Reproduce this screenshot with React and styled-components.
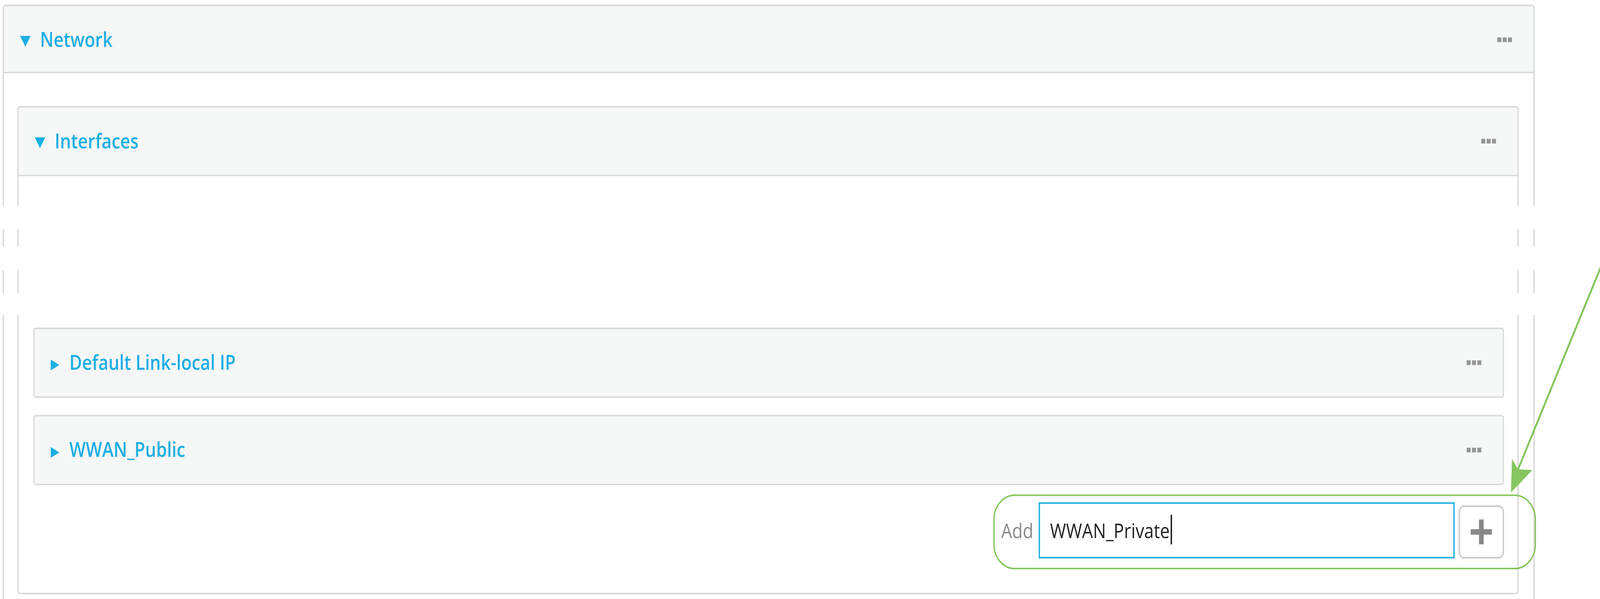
import React, { useEffect, useState } from "react";
import styled, { createGlobalStyle } from "styled-components";

const GlobalStyle = createGlobalStyle`
  html, body {
    margin: 0;
    padding: 0;
    background: #fff;
  }

  html {
    overflow: hidden;
  }

  body {
    font-family: "Open Sans", "Liberation Sans", sans-serif;
  }
`;

// the layout is drawn at the source size (1200x384) and stretched to the window
const BASE_W = 1200;
const BASE_H = 384;

const useFit = () => {
  const measure = () => ({
    x: window.innerWidth / BASE_W,
    y: window.innerHeight / BASE_H,
  });
  const [scale, setScale] = useState(measure);

  useEffect(() => {
    const onResize = () => setScale(measure());
    window.addEventListener("resize", onResize);
    return () => window.removeEventListener("resize", onResize);
  }, []);

  return scale;
};

const Viewport = styled.div`
  width: 100vw;
  height: 100vh;
  overflow: hidden;
  background: #fff;
`;

const Stage = styled.div`
  position: relative;
  width: ${BASE_W}px;
  height: ${BASE_H}px;
  padding: 3px 0 0 2px;
  box-sizing: border-box;
  overflow: hidden;
  background: #fff;
  transform-origin: 0 0;
`;

const Panel = styled.section`
  box-sizing: border-box;
  width: ${(p) => (p.$width ? `${p.$width}px` : "auto")};
  border: 1px solid #d9d9d9;
  border-radius: 2px;
  background: #fff;

  & + & {
    margin-top: 11px;
  }
`;

const PanelHeader = styled.header`
  display: flex;
  align-items: center;
  justify-content: space-between;
  height: ${(p) => p.$height || 43}px;
  padding: 0 16px 0 12px;
  background: #f6f7f7;
  border-bottom: ${(p) => (p.$open ? "1px solid #d9d9d9" : "none")};
  border-radius: ${(p) => (p.$open ? "2px 2px 0 0" : "2px")};
`;

const Title = styled.span`
  display: flex;
  align-items: center;
  gap: 7px;
  color: #1eaee4;
  font-size: 13px;
  font-weight: 600;
  line-height: 1;
  white-space: nowrap;

  svg {
    margin-top: 2px;
    flex: none;
  }
`;

const Dots = styled.span`
  display: flex;
  gap: 1.25px;

  i {
    width: 3px;
    height: 3px;
    background: #959595;
  }
`;

const OuterBody = styled.div`
  padding: 21px 11px 40px 10px;
`;

const InnerBody = styled.div`
  padding: 0 10px 22px 11px;
`;

const Elided = styled.div`
  height: 97px;
`;

const AddRow = styled.div`
  display: flex;
  justify-content: flex-end;
  margin-top: 11px;
`;

const AddGroup = styled.div`
  position: relative;
  display: flex;
  align-items: flex-end;
  gap: 3.5px;
`;

const AddLabel = styled.label`
  align-self: center;
  color: #8b8b8b;
  font-size: 13px;
`;

const TextField = styled.div`
  box-sizing: border-box;
  display: flex;
  align-items: center;
  width: 312px;
  height: 35.5px;
  padding: 0 8px;
  border: 1px solid #1fb0e3;
  color: #222;
  font-size: 13px;
  white-space: nowrap;
`;

const Caret = styled.span`
  display: inline-block;
  width: 1px;
  height: 19px;
  margin-left: 0.5px;
  background: #111;
`;

const PlusButton = styled.button`
  box-sizing: border-box;
  display: flex;
  align-items: center;
  justify-content: center;
  width: 34px;
  height: 34px;
  padding: 0;
  border: 1px solid #cbcbcb;
  border-radius: 4px;
  background: #fff;
`;

const Highlight = styled.span`
  position: absolute;
  top: -5px;
  right: -24px;
  bottom: -7.5px;
  left: -6px;
  border: 1.25px solid #86c55f;
  border-radius: 16px;
  pointer-events: none;
`;

// white bands where the screenshot was cut
const Tear = styled.div`
  position: absolute;
  left: 0;
  top: ${(p) => p.$top}px;
  width: 1165px;
  height: 14.75px;
  background: #fff;
`;

const Callout = styled.svg`
  position: absolute;
  inset: 0;
  width: ${BASE_W}px;
  height: ${BASE_H}px;
  overflow: visible;
  pointer-events: none;
`;

const Triangle = ({ open }) =>
  open ? (
    <svg width="8" height="7" viewBox="0 0 8 7">
      <polygon points="0,0 8,0 4,7" fill="#1eaee4" />
    </svg>
  ) : (
    <svg width="7" height="8" viewBox="0 0 7 8">
      <polygon points="0,0.5 6.5,4 0,7.5" fill="#1eaee4" />
    </svg>
  );

const More = () => (
  <Dots>
    <i />
    <i />
    <i />
  </Dots>
);

const Heading = ({ title, open, height }) => (
  <PanelHeader $open={open} $height={height}>
    <Title>
      <Triangle open={open} />
      {title}
    </Title>
    <More />
  </PanelHeader>
);

const interfaces = ["Default Link-local IP", "WWAN_Public"];

export default function App() {
  const scale = useFit();

  return (
    <Viewport>
      <GlobalStyle />
      <Stage style={{ transform: `scale(${scale.x}, ${scale.y})` }}>
        <Panel $width={1149}>
          <Heading title="Network" open height={42} />
          <OuterBody>
            <Panel>
              <Heading title="Interfaces" open />
              <InnerBody>
                <Elided />
                {interfaces.map((name) => (
                  <Panel key={name}>
                    <Heading title={name} />
                  </Panel>
                ))}
                <AddRow>
                  <AddGroup>
                    <AddLabel>Add</AddLabel>
                    <TextField>
                      WWAN_Private
                      <Caret />
                    </TextField>
                    <PlusButton>
                      <svg width="16" height="16" viewBox="0 0 16 16">
                        <path
                          d="M6.25 0h3.5v6.25H16v3.5H9.75V16h-3.5V9.75H0v-3.5h6.25z"
                          fill="#888"
                        />
                      </svg>
                    </PlusButton>
                    <Highlight />
                  </AddGroup>
                </AddRow>
              </InnerBody>
            </Panel>
          </OuterBody>
        </Panel>

        <Tear $top={132.25} />
        <Tear $top={158.25} />
        <Tear $top={187.5} />

        <Callout viewBox={`0 0 ${BASE_W} ${BASE_H}`}>
          <line
            x1="1203"
            y1="166.2"
            x2="1138.6"
            y2="300.8"
            stroke="#86c55f"
            strokeWidth="1.4"
          />
          <polygon
            points="1133.2,315.8 1134,294.2 1138.6,300.8 1149.3,301.3"
            fill="#86c55f"
          />
        </Callout>
      </Stage>
    </Viewport>
  );
}
